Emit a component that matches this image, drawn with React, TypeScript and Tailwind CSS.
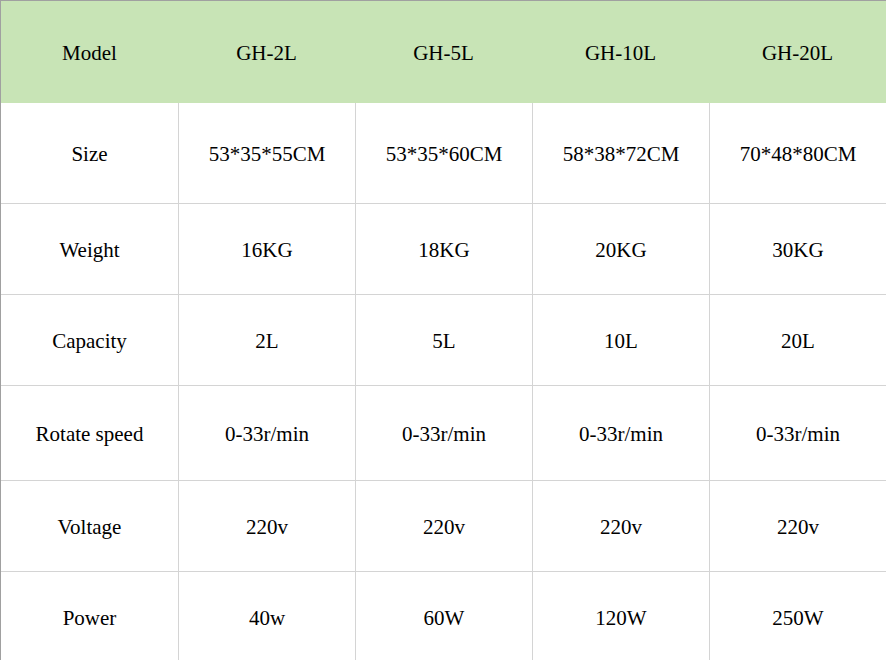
const header = ['Model', 'GH-2L', 'GH-5L', 'GH-10L', 'GH-20L'];

const rows: { cells: string[]; h: string }[] = [
    { cells: ['Size', '53*35*55CM', '53*35*60CM', '58*38*72CM', '70*48*80CM'], h: 'h-[100px]' },
    { cells: ['Weight', '16KG', '18KG', '20KG', '30KG'], h: 'h-[91px] border-t' },
    { cells: ['Capacity', '2L', '5L', '10L', '20L'], h: 'h-[91px] border-t' },
    { cells: ['Rotate speed', '0-33r/min', '0-33r/min', '0-33r/min', '0-33r/min'], h: 'h-[95px] border-t' },
    { cells: ['Voltage', '220v', '220v', '220v', '220v'], h: 'h-[91px] border-t' },
    { cells: ['Power', '40w', '60W', '120W', '250W'], h: 'h-[91px] border-t' },
];

export default function App() {
    return (
        <div className="w-[886px] h-[660px] overflow-hidden bg-white border-t border-l border-[#a0a0a0] font-['Liberation_Serif',serif] text-[21px] text-black">
            <div className="grid grid-cols-[177px_177px_177px_177px_177px] h-[102px] bg-[#c8e4b6]">
                {header.map((h) => (
                    <div key={h} className="flex items-center justify-center pt-[4px]">
                        {h}
                    </div>
                ))}
            </div>
            {rows.map((row) => (
                <div
                    key={row.cells[0]}
                    className={`grid grid-cols-[177px_177px_177px_177px_177px] border-[#d4d4d4] ${row.h}`}
                >
                    {row.cells.map((c, i) => (
                        <div
                            key={i}
                            className={i === 0 ? 'flex items-center justify-center pt-[4px]' : 'flex items-center justify-center pt-[4px] border-l border-[#d4d4d4]'}
                        >
                            {c}
                        </div>
                    ))}
                </div>
            ))}
        </div>
    );
}
